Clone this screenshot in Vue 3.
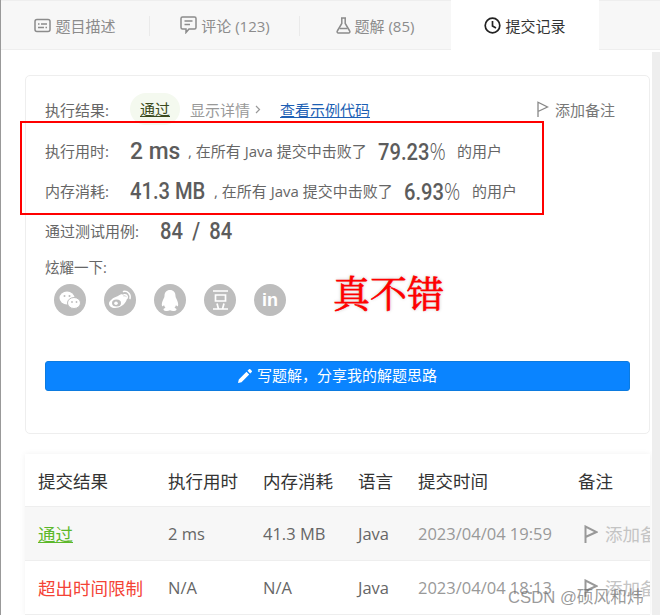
<script setup>
const tabs = [
  { id: 'desc', label: '题目描述', count: '' },
  { id: 'comment', label: '评论', count: '(123)' },
  { id: 'solution', label: '题解', count: '(85)' },
  { id: 'record', label: '提交记录', count: '', active: true }
]
const writeLabel = '写题解\uFF0C分享我的解题思路'
const submissions = [
  { status: '通过', kind: 'ok', time: '2 ms', mem: '41.3 MB', lang: 'Java', at: '2023/04/04 19:59' },
  { status: '超出时间限制', kind: 'bad', time: 'N/A', mem: 'N/A', lang: 'Java', at: '2023/04/04 18:13' }
]
</script>

<template>
  <div class="page">
    <nav class="tabs">
      <div v-for="t in tabs" :key="t.id" class="tab" :class="{ active: t.active }">
        <svg v-if="t.id === 'desc'" class="ti" width="17" height="15" viewBox="0 0 17 15" fill="none" stroke="#8c8c8c" stroke-width="1.5">
          <rect x="1" y="1.5" width="15" height="12" rx="2" />
          <path d="M4 6h1.5M7 6h6M4 9.5h6M11.500 9.500h1.500" />
        </svg>
        <svg v-else-if="t.id === 'comment'" class="ti" width="17" height="18" viewBox="0 0 17 18" fill="none" stroke="#8c8c8c" stroke-width="1.5">
          <path d="M2.500 1h12a1.500 1.500 0 0 1 1.500 1.500v9a1.500 1.500 0 0 1-1.500 1.500H9l-3 3.500V13H2.500A1.500 1.500 0 0 1 1 11.500v-9A1.500 1.500 0 0 1 2.500 1z" />
          <path d="M4.500 5h8M4.500 8.500h5.500" />
        </svg>
        <svg v-else-if="t.id === 'solution'" class="ti" width="15" height="17" viewBox="0 0 15 17" fill="none" stroke="#8c8c8c" stroke-width="1.500">
          <path d="M5 1h5M5.800 1v5.500L1.300 14a1.300 1.300 0 0 0 1.100 2h10.200a1.300 1.300 0 0 0 1.100-2L9.200 6.500V1" />
          <path d="M3.500 11.500h8" />
        </svg>
        <svg v-else class="ti" width="17" height="17" viewBox="0 0 17 17" fill="none" stroke="#222" stroke-width="1.700">
          <circle cx="8.500" cy="8.500" r="7.300" />
          <path d="M8.500 4v5l3.500 2" />
        </svg>
        <span class="tl">{{ t.label }}<template v-if="t.count">&nbsp;{{ t.count }}</template></span>
      </div>
    </nav>

    <div class="body">
      <main class="content">
        <section class="card">
          <div class="row r1">
            <span class="label lab-result">执行结果:</span>
            <span class="pill">通过</span>
            <span class="detail">显示详情<svg width="6" height="9" viewBox="0 0 6 9" fill="none" stroke="#999" stroke-width="1.200"><path d="M1 1l3.500 3.500L1 8" /></svg></span>
            <a class="link">查看示例代码</a>
            <span class="note">
              <svg width="12" height="16" viewBox="0 0 12 16" fill="none" stroke="#888" stroke-width="1.300"><path d="M1 16V1.200L10.500 6 1 10.500" /></svg>
              添加备注
            </span>
          </div>

          <div class="row r2">
            <span class="label lab-stat">执行用时:</span>
            <span class="slot s-time"><b class="num">2 ms</b></span>
            <span class="txt">, 在所有 Java 提交中击败了</span>
            <span class="slot s-pct1"><b class="num">79.23<i>%</i></b></span>
            <span class="users">的用户</span>
          </div>

          <div class="row r3">
            <span class="label lab-stat">内存消耗:</span>
            <span class="slot s-mem"><b class="num">41.3 MB</b></span>
            <span class="txt">, 在所有 Java 提交中击败了</span>
            <span class="slot s-pct2"><b class="num">6.93<i>%</i></b></span>
            <span class="users">的用户</span>
          </div>

          <div class="row r4">
            <span class="label lab-case">通过测试用例:</span>
            <span class="slot"><b class="num cases">84 / 84</b></span>
          </div>

          <div class="share-title">炫耀一下:</div>
          <div class="share">
            <span class="soc">
              <svg width="22" height="18" viewBox="0 0 22 18">
                <ellipse cx="8" cy="7" rx="7.500" ry="6.500" fill="#fff" />
                <circle cx="5.500" cy="5" r="1" fill="#bdbdbd" />
                <circle cx="10.500" cy="5" r="1" fill="#bdbdbd" />
                <ellipse cx="15" cy="12" rx="6.500" ry="5.500" fill="#fff" stroke="#bdbdbd" />
                <circle cx="13" cy="11" r=".9" fill="#bdbdbd" />
                <circle cx="17.500" cy="11" r=".9" fill="#bdbdbd" />
              </svg>
            </span>
            <span class="soc">
              <svg width="24" height="20" viewBox="0 0 24 20" fill="none">
                <path d="M10 6c3-2.500 6-2.500 5.500 .5 3-.8 4.500 1 3 3.800-1.500 4.500-7 7.700-11.500 7.700C3.500 18 1 16 1 13.500 1 11 5 7.500 10 6z" fill="#fff" />
                <ellipse cx="8.500" cy="13" rx="4.500" ry="3.500" fill="#bdbdbd" />
                <circle cx="8" cy="13.200" r="1.800" fill="#fff" />
                <path d="M15.500 1.500c4-.8 7.500 2.500 6.500 7M16 4.800c2.200-.5 3.700 1 3.200 3.200" stroke="#fff" stroke-width="1.500" stroke-linecap="round" />
              </svg>
            </span>
            <span class="soc">
              <svg width="18" height="21" viewBox="0 0 18 21">
                <path fill="#fff" d="M9 0c3.500 0 5.500 2.500 5.500 6 0 1 .3 1.500 .8 2.500 1 2 2.500 5.500 1.700 7.500-.5 .8-1.300 .2-2-1-.3 1.300-.8 2-1.500 2.700 1.300 .5 2 1 2 1.800 0 1.200-2 1.500-3.500 1.500-1 0-2-.5-3-.8-1 .3-2 .8-3 .8-1.500 0-3.500-.3-3.500-1.500 0-.8 .7-1.300 2-1.800-.7-.7-1.200-1.400-1.500-2.700-.7 1.200-1.500 1.800-2 1-.8-2 .7-5.500 1.700-7.500 .5-1 .8-1.500 .8-2.500C3.500 2.500 5.500 0 9 0z" />
              </svg>
            </span>
            <span class="soc">
              <svg width="15" height="20" viewBox="0 0 15 20" fill="none" stroke="#fff" stroke-width="1.700">
                <path d="M0 1h15M0 19h15M2.500 5h10v6h-10zM4 13.500l1.500 5.500M11 13.500l-1.500 5.500" />
              </svg>
            </span>
            <span class="soc linkedin">in</span>
          </div>

          <div class="write">
            <button class="btn" type="button">
              <svg width="14" height="14" viewBox="0 0 14 14" fill="#fff"><path d="M0 14l.8-3.500L8.500 2.800l2.700 2.700L3.500 13.200zM9.500 1.800L11 .3a.9 .9 0 0 1 1.300 0l1.400 1.400a.9 .9 0 0 1 0 1.300l-1.500 1.500z" /></svg>
              <span class="btn-text">{{ writeLabel }}</span>
            </button>
          </div>
        </section>

        <section class="table">
          <div class="tr head">
            <span>提交结果</span><span>执行用时</span><span>内存消耗</span><span>语言</span><span>提交时间</span><span>备注</span>
          </div>
          <div v-for="(s, i) in submissions" :key="i" class="tr" :class="{ odd: i === 0 }">
            <span class="st" :class="s.kind">{{ s.status }}</span>
            <span>{{ s.time }}</span>
            <span>{{ s.mem }}</span>
            <span>{{ s.lang }}</span>
            <span class="at">{{ s.at }}</span>
            <span class="add">
              <svg width="14" height="18" viewBox="0 0 14 18" fill="none" stroke="#999" stroke-width="2"><path d="M1.500 18V1.500L12.500 7 1.500 12" /></svg>
              添加备注
            </span>
          </div>
        </section>
      </main>
      <div class="scrollbar"></div>
    </div>

    <div class="redbox"></div>
    <div class="stamp">真不错</div>
    <div class="mark">CSDN @硕风和炜</div>
  </div>
</template>

<style scoped>
.page {
  position: relative;
  width: 660px;
  height: 615px;
  overflow: hidden;
  background: #fff;
  font-family: "Open Sans", "Noto Sans CJK SC", sans-serif;
  color: #666;
  box-sizing: border-box;
  border-left: 1px solid #999;
}
.tabs {
  display: flex;
  height: 50px;
  box-sizing: border-box;
  margin-left: -1px;
  background: #f7f7f7;
  border-top: 1px solid #eee;
  border-bottom: 1px solid #eee;
}
.tab {
  width: 150px;
  display: flex;
  align-items: center;
  justify-content: center;
  gap: 4px;
  font-size: 15px;
  color: #8c8c8c;
  position: relative;
}
.tab:not(.active):not(:nth-child(3))::after {
  content: "";
  position: absolute;
  right: 0;
  top: 15px;
  height: 20px;
  width: 1px;
  background: #eaeaea;
}
.tab.active {
  background: #fff;
  color: #333;
  height: 50px;
  margin-top: -1px;
  width: 148px;
  margin-left: 1px;
}
.ti { flex: none; }
.body { display: flex; height: 565px; }
.content { width: 651px; flex: none; padding: 25px 0 0 24px; box-sizing: border-box; }
.scrollbar { width: 8px; margin-top: 2px; background: #eee; }
.card {
  width: 625px;
  height: 359px;
  box-sizing: border-box;
  border: 1px solid #eee;
  border-radius: 5px;
  padding: 13px 19px 0;
}
.row { display: flex; align-items: center; white-space: nowrap; }
.r1 { height: 40px; margin-bottom: 1px; }
.r2 { height: 41px; }
.r3 { height: 39px; }
.r4 { height: 41px; }
.label { font-size: 15px; color: #666; }
.lab-result, .lab-stat { width: 85px; }
.lab-case { width: 115px; }
.pill {
  width: 50px;
  height: 32px;
  line-height: 32px;
  text-align: center;
  font-size: 15px;
  border-radius: 16px;
  background: #f4f9ef;
  color: #3a4a20;
  text-decoration: underline;
}
.detail {
  margin-left: 10px;
  width: 90px;
  font-size: 15px;
  color: #999;
  display: flex;
  align-items: center;
  gap: 5px;
}
.link { font-size: 15px; color: #1d5fb4; text-decoration: underline; }
.note {
  margin-left: auto;
  margin-right: 15px;
  font-size: 15px;
  color: #777;
  display: flex;
  align-items: center;
  gap: 6px;
}
.slot { display: block; flex: none; }
.s-time { width: 58px; }
.s-mem { width: 84px; }
.s-pct1 { width: 79px; }
.s-pct2 { width: 68px; }
.num {
  display: inline-block;
  transform: scaleX(.84);
  transform-origin: left center;
  font-family: Roboto, sans-serif;
  font-weight: 500;
  color: #5c5c5c;
  font-size: 24px;
  white-space: nowrap;
}
.s-time .num { transform: scaleX(.95); }
.cases { word-spacing: 5px; }
.num i { font-style: normal; font-family: "Open Sans", sans-serif; font-weight: 300; }
.txt { font-size: 15px; color: #666; width: 190px; flex: none; }
.users { font-size: 15px; color: #666; }
.share-title { margin-top: 7px; height: 20px; line-height: 20px; font-size: 14.500px; color: #666; }
.share { display: flex; gap: 18px; margin-top: 6px; padding-left: 9px; }
.soc {
  width: 32px;
  height: 32px;
  border-radius: 50%;
  background: #bdbdbd;
  display: flex;
  align-items: center;
  justify-content: center;
}
.linkedin {
  font-family: "Liberation Sans", sans-serif;
  font-weight: 700;
  font-size: 18px;
  color: #fff;
}
.write { margin-top: 45px; }
.btn {
  width: 585px;
  height: 30px;
  border: 1px solid #0c7be0;
  border-radius: 3px;
  background: #0a84ff;
  color: #fff;
  font-family: "Noto Sans CJK SC", sans-serif;
  font-size: 15px;
  display: flex;
  align-items: center;
  justify-content: center;
  gap: 5px;
  padding: 0;
}
.btn-text { position: relative; top: -2px; }
.table {
  width: 625px;
  margin-top: 20px;
  overflow: hidden;
  box-shadow: 0 0 6px rgba(0, 0, 0, .06);
}
.tr {
  display: grid;
  grid-template-columns: 130px 95px 95px 60px 160px 1fr;
  align-items: center;
  height: 53px;
  padding-left: 13px;
  border-bottom: 1px solid #eee;
  box-sizing: content-box;
  font-size: 16.500px;
  color: #666;
  white-space: nowrap;
}
.head { height: 52px; font-size: 17.500px; color: #333; }
.odd { background: #f7f7f7; }
.st { font-size: 17.500px; }
.ok { color: #5cb82a; text-decoration: underline; text-decoration-thickness: 1px; }
.bad { color: #f44336; }
.at { color: #999; }
.add { display: flex; align-items: center; gap: 7px; padding-left: 6px; color: #c4c4c4; font-size: 17.500px; }
.redbox {
  position: absolute;
  left: 19px;
  top: 121px;
  width: 524px;
  height: 94px;
  box-sizing: border-box;
  border: 2px solid #f00;
  pointer-events: none;
}
.stamp {
  position: absolute;
  left: 332px;
  top: 266px;
  font-family: "Noto Serif CJK SC", "Noto Sans CJK SC", serif;
  font-size: 37px;
  line-height: 52px;
  color: #f00;
  -webkit-text-stroke: .7px #f00;
  text-shadow: 0 0 3px #ccc, 0 0 4px #ddd;
}
.mark {
  position: absolute;
  left: 507px;
  top: 587px;
  font-family: "Liberation Sans", "Noto Sans CJK SC", sans-serif;
  font-size: 16.700px;
  line-height: 22px;
  color: rgba(110, 110, 110, .7);
}
</style>

<style>
html, body { margin: 0; overflow: hidden; }
</style>
